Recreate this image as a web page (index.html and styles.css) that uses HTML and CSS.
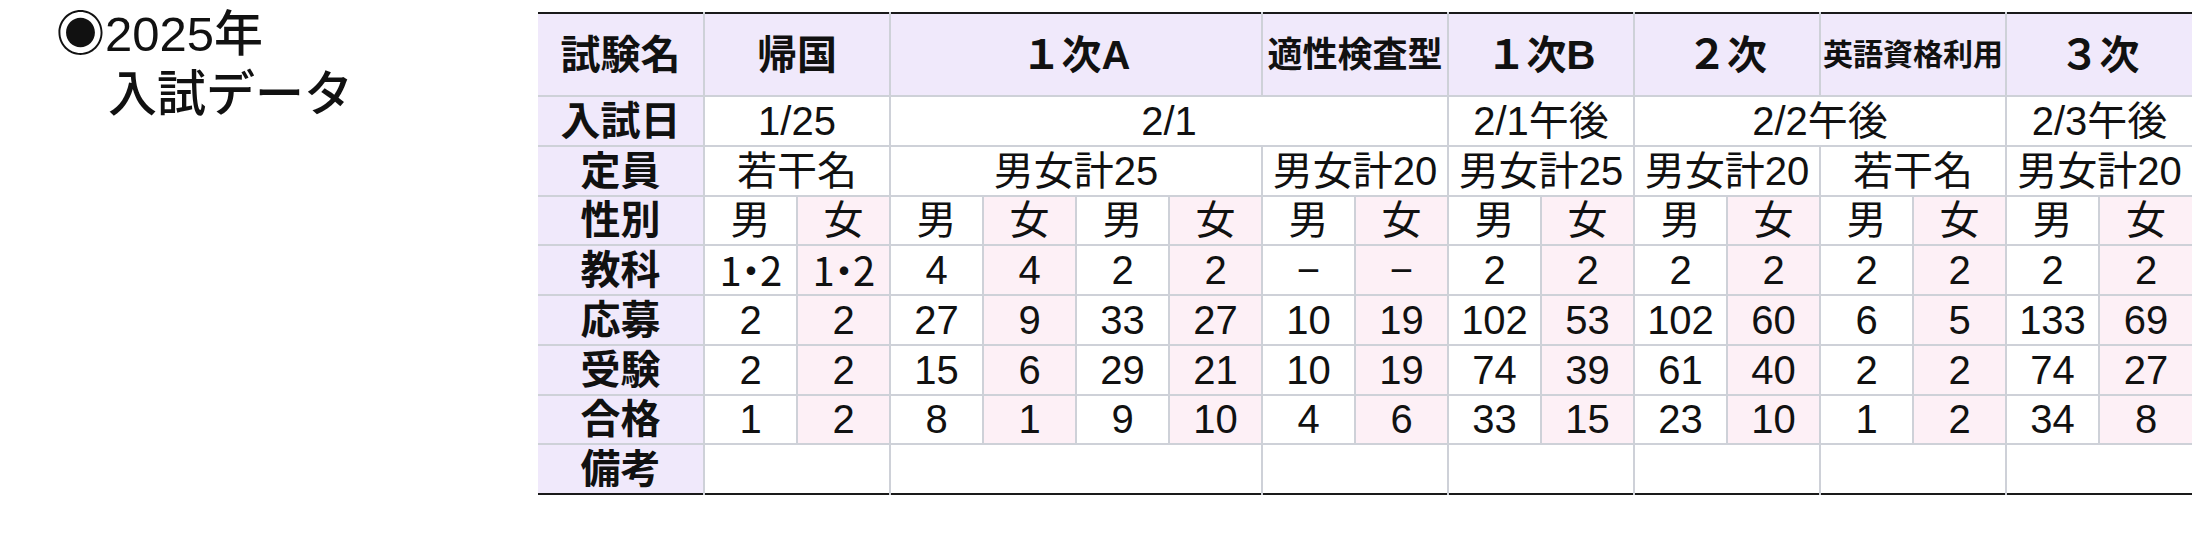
FILE: index.html
```html
<!DOCTYPE html>
<html lang="ja">
<head>
<meta charset="utf-8">
<title>2025年 入試データ</title>
<link rel="stylesheet" href="styles.css">
</head>
<body>
<div class="page">
  <div class="title">
    <div class="title-line">◉2025年</div>
    <div class="title-line indent">入試データ</div>
  </div>
  <table class="data">
    <colgroup>
      <col class="c-label">
      <col><col><col><col><col><col><col><col>
      <col><col><col><col><col><col><col><col>
    </colgroup>
    <tr class="r-head">
      <th class="lbl">試験名</th>
      <th colspan="2">帰国</th>
      <th colspan="4">１次A</th>
      <th colspan="2" class="small1">適性検査型</th>
      <th colspan="2">１次B</th>
      <th colspan="2">２次</th>
      <th colspan="2" class="small2">英語資格利用</th>
      <th colspan="2">３次</th>
    </tr>
    <tr>
      <th class="lbl">入試日</th>
      <td colspan="2">1/25</td>
      <td colspan="6">2/1</td>
      <td colspan="2">2/1午後</td>
      <td colspan="4">2/2午後</td>
      <td colspan="2">2/3午後</td>
    </tr>
    <tr>
      <th class="lbl">定員</th>
      <td colspan="2">若干名</td>
      <td colspan="4">男女計25</td>
      <td colspan="2">男女計20</td>
      <td colspan="2">男女計25</td>
      <td colspan="2">男女計20</td>
      <td colspan="2">若干名</td>
      <td colspan="2">男女計20</td>
    </tr>
    <tr>
      <th class="lbl">性別</th>
      <td>男</td><td class="f">女</td><td>男</td><td class="f">女</td><td>男</td><td class="f">女</td><td>男</td><td class="f">女</td>
      <td>男</td><td class="f">女</td><td>男</td><td class="f">女</td><td>男</td><td class="f">女</td><td>男</td><td class="f">女</td>
    </tr>
    <tr>
      <th class="lbl">教科</th>
      <td><span class="pair">1・2</span></td><td class="f"><span class="pair">1・2</span></td><td>4</td><td class="f">4</td><td>2</td><td class="f">2</td><td>−</td><td class="f">−</td>
      <td>2</td><td class="f">2</td><td>2</td><td class="f">2</td><td>2</td><td class="f">2</td><td>2</td><td class="f">2</td>
    </tr>
    <tr>
      <th class="lbl">応募</th>
      <td>2</td><td class="f">2</td><td>27</td><td class="f">9</td><td>33</td><td class="f">27</td><td>10</td><td class="f">19</td>
      <td>102</td><td class="f">53</td><td>102</td><td class="f">60</td><td>6</td><td class="f">5</td><td>133</td><td class="f">69</td>
    </tr>
    <tr>
      <th class="lbl">受験</th>
      <td>2</td><td class="f">2</td><td>15</td><td class="f">6</td><td>29</td><td class="f">21</td><td>10</td><td class="f">19</td>
      <td>74</td><td class="f">39</td><td>61</td><td class="f">40</td><td>2</td><td class="f">2</td><td>74</td><td class="f">27</td>
    </tr>
    <tr>
      <th class="lbl">合格</th>
      <td>1</td><td class="f">2</td><td>8</td><td class="f">1</td><td>9</td><td class="f">10</td><td>4</td><td class="f">6</td>
      <td>33</td><td class="f">15</td><td>23</td><td class="f">10</td><td>1</td><td class="f">2</td><td>34</td><td class="f">8</td>
    </tr>
    <tr>
      <th class="lbl">備考</th>
      <td colspan="2"></td>
      <td colspan="4"></td>
      <td colspan="2"></td>
      <td colspan="2"></td>
      <td colspan="2"></td>
      <td colspan="2"></td>
      <td colspan="2"></td>
    </tr>
  </table>
</div>
</body>
</html>
```

FILE: styles.css
```css
html, body {
  margin: 0;
  padding: 0;
  background: #ffffff;
}

.page {
  display: flex;
  align-items: flex-start;
  color: #111111;
  font-family: "Liberation Sans", "Noto Sans CJK JP", sans-serif;
}

.title {
  width: 482px;
  padding-left: 56px;
  padding-top: 4px;
  font-size: 49px;
  font-weight: 500;
  line-height: 60px;
}

.title-line {
  white-space: nowrap;
}

.indent {
  padding-left: 52px;
}

.data {
  margin-top: 12px;
  width: 1654px;
  table-layout: fixed;
  border-collapse: collapse;
  border-top: 2px solid #1a1a1a;
  border-bottom: 2px solid #1a1a1a;
  font-size: 40px;
}

.c-label {
  width: 166px;
}

.data th,
.data td {
  padding: 0;
  height: 47.75px;
  line-height: 1;
  text-align: center;
  vertical-align: middle;
  white-space: nowrap;
  border-left: 2px solid #ced1d8;
  border-top: 2px solid #ced1d8;
}

.data th {
  font-weight: 700;
}

.data td {
  font-weight: 400;
  background: #ffffff;
}

.data .lbl {
  border-left: none;
  background: #f0e9fb;
}

.r-head th {
  height: 81px;
  background: #f0e9fb;
  border-top: none;
}

.r-head .small1 {
  font-size: 35px;
}

.r-head .small2 {
  font-size: 30px;
}

.data td.f {
  background: #fdf0f6;
}

.pair {
  font-family: "Noto Sans CJK JP", sans-serif;
  font-feature-settings: "palt";
  letter-spacing: -0.02em;
}
```
